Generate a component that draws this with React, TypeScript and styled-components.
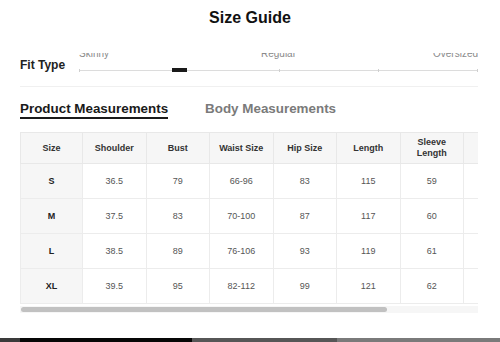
import styled, { createGlobalStyle } from 'styled-components';

const GlobalStyle = createGlobalStyle`
  html, body {
    margin: 0;
    padding: 0;
    background: #ffffff;
  }
  body {
    font-family: 'Liberation Sans', Arial, sans-serif;
    color: #222;
  }
`;

const fitLabels = ['Skinny', 'Regular', 'Oversized'];
const ticks = [0, 50, 75, 100];

const columns = ['Size', 'Shoulder', 'Bust', 'Waist Size', 'Hip Size', 'Length', 'Sleeve Length', 'Cuff', 'Bicep'];

const rows = [
  ['S', '36.5', '79', '66-96', '83', '115', '59', '22', '31'],
  ['M', '37.5', '83', '70-100', '87', '117', '60', '23', '32'],
  ['L', '38.5', '89', '76-106', '93', '119', '61', '24', '33.5'],
  ['XL', '39.5', '95', '82-112', '99', '121', '62', '25', '35'],
];

const VIEW_WIDTH = 458;
const TABLE_WIDTH = 570;

const Page = styled.div`
  display: flex;
  flex-direction: column;
  height: 342px;
  overflow: hidden;
`;

const Title = styled.h1`
  margin: 0;
  padding-top: 8px;
  height: 28px;
  line-height: 20px;
  font-size: 16px;
  font-weight: 700;
  text-align: center;
  color: #111;
`;

const Content = styled.div`
  padding: 0 22px 0 20px;
`;

const FitRow = styled.div`
  display: flex;
  margin-top: 17px;
  height: 20px;
`;

const FitLabel = styled.div`
  width: 59px;
  padding-top: 4px;
  font-size: 12px;
  line-height: 16px;
  font-weight: 700;
  color: #222;
`;

const SliderClip = styled.div`
  flex: 1;
  height: 20px;
  overflow: hidden;
`;

const SliderLabels = styled.div`
  display: grid;
  grid-template-columns: 1fr auto 1fr;
  margin-top: -5px;
  font-size: 10px;
  line-height: 12px;
  color: #8a8a8a;

  & > span:first-child {
    justify-self: start;
  }
  & > span:last-child {
    justify-self: end;
  }
`;

const Track = styled.div`
  position: relative;
  margin-top: 10px;
  height: 1px;
  background: #dcdcdc;
`;

const Tick = styled.span<{ $at: number }>`
  position: absolute;
  left: ${({ $at }) => `calc(${$at}% - ${$at === 100 ? 1 : 0}px)`};
  top: -1px;
  width: 1px;
  height: 3px;
  background: #cfcfcf;
`;

const Thumb = styled.span`
  position: absolute;
  left: 93px;
  top: -2px;
  width: 15px;
  height: 4px;
  background: #1a1a1a;
`;

const Divider = styled.hr`
  margin: 13px 0 0;
  border: 0;
  height: 1px;
  background: #f0f0f0;
`;

const Tabs = styled.div`
  display: flex;
  gap: 37px;
  margin-top: 14px;
`;

const Tab = styled.div<{ $active?: boolean }>`
  font-size: 13.4px;
  line-height: 16px;
  font-weight: 700;
  color: ${({ $active }) => ($active ? '#1a1a1a' : '#7a7a7a')};
  border-bottom: 2px solid ${({ $active }) => ($active ? '#1a1a1a' : 'transparent')};
`;

const TableScroll = styled.div`
  margin-top: 13px;
  overflow: hidden;
`;

const Table = styled.table`
  border-collapse: collapse;
  table-layout: fixed;
  width: ${TABLE_WIDTH}px;
  font-size: 9px;
`;

const Col = styled.col<{ $w: number }>`
  width: ${({ $w }) => $w}px;
`;

const HeadCell = styled.th`
  height: 30px;
  padding: 0 4px;
  background: #f6f6f6;
  border: 1px solid #e8e8e8;
  font-weight: 700;
  color: #333;
  line-height: 11px;
  text-align: center;
`;

const Cell = styled.td<{ $size?: boolean }>`
  height: 34px;
  padding: 0 4px;
  border: 1px solid #ececec;
  text-align: center;
  background: ${({ $size }) => ($size ? '#f6f6f6' : '#ffffff')};
  font-weight: ${({ $size }) => ($size ? 700 : 400)};
  color: ${({ $size }) => ($size ? '#222' : '#555')};
`;

const ScrollTrack = styled.div`
  margin-top: 2px;
  height: 7px;
  padding: 1px;
  box-sizing: border-box;
  background: #f6f6f6;
`;

const ScrollThumb = styled.div`
  height: 5px;
  border-radius: 3px;
  background: #c1c1c1;
`;

const BottomBar = styled.div`
  display: flex;
  height: 4px;
  margin-top: auto;
`;

const Segment = styled.div<{ $w?: number; $bg: string }>`
  flex: ${({ $w }) => ($w ? `0 0 ${$w}px` : '1')};
  background: ${({ $bg }) => $bg};
`;

const App = () => {
  const thumbWidth = Math.round(((VIEW_WIDTH - 2) * VIEW_WIDTH) / TABLE_WIDTH);
  return (
    <>
      <GlobalStyle />
      <Page>
        <Title>Size Guide</Title>
        <Content>
          <FitRow>
            <FitLabel>Fit Type</FitLabel>
            <SliderClip>
              <SliderLabels>
                {fitLabels.map((label) => (
                  <span key={label}>{label}</span>
                ))}
              </SliderLabels>
              <Track>
                {ticks.map((t) => (
                  <Tick key={t} $at={t} />
                ))}
                <Thumb />
              </Track>
            </SliderClip>
          </FitRow>
          <Divider />
          <Tabs>
            <Tab $active>Product Measurements</Tab>
            <Tab>Body Measurements</Tab>
          </Tabs>
          <TableScroll>
            <Table>
              <colgroup>
                {columns.map((c, i) => (
                  <Col key={c} $w={i === 0 ? 62 : 63.5} />
                ))}
              </colgroup>
              <thead>
                <tr>
                  {columns.map((c) => (
                    <HeadCell key={c}>
                      {c === 'Sleeve Length' ? (
                        <>
                          Sleeve
                          <br />
                          Length
                        </>
                      ) : (
                        c
                      )}
                    </HeadCell>
                  ))}
                </tr>
              </thead>
              <tbody>
                {rows.map((row) => (
                  <tr key={row[0]}>
                    {row.map((v, i) => (
                      <Cell key={i} $size={i === 0}>
                        {v}
                      </Cell>
                    ))}
                  </tr>
                ))}
              </tbody>
            </Table>
          </TableScroll>
          <ScrollTrack>
            <ScrollThumb style={{ width: thumbWidth }} />
          </ScrollTrack>
        </Content>
        <BottomBar>
          <Segment $w={20} $bg="#3a3a3a" />
          <Segment $w={172} $bg="#060606" />
          <Segment $w={145} $bg="#565656" />
          <Segment $bg="#7a7a7a" />
        </BottomBar>
      </Page>
    </>
  );
};

export default App;
